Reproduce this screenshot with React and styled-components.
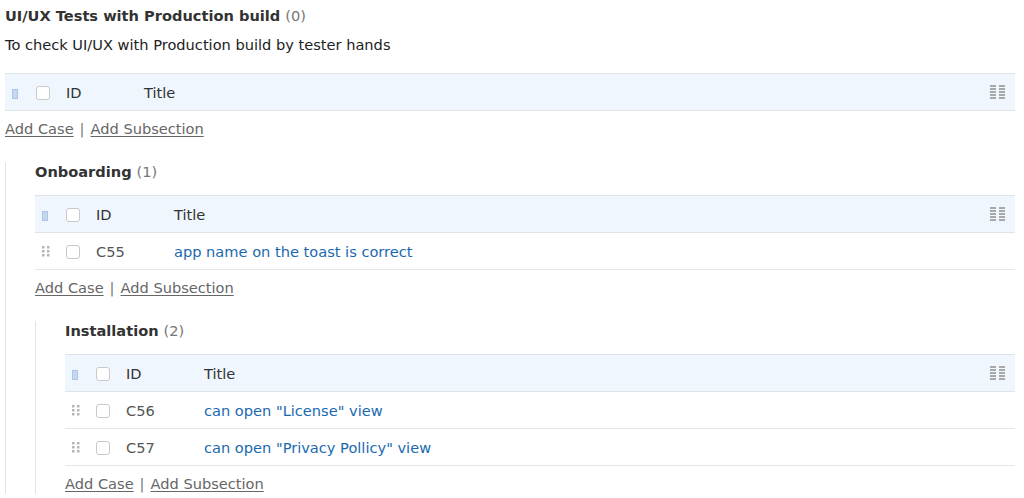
import React from "react";
import styled, { createGlobalStyle } from "styled-components";

const GlobalStyle = createGlobalStyle`
  body {
    margin: 0;
    background: #fff;
    font-family: "DejaVu Sans", Verdana, sans-serif;
    font-size: 14.6px;
    color: #333;
  }
`;

const Page = styled.div`
  padding: 6px 9px 0 5px;
`;

const SectionBox = styled.div`
  margin-top: ${(p) => (p.$nested ? "23px" : "0")};
  border-left: ${(p) => (p.$nested ? "1px solid #e3e3e3" : "none")};
  padding-left: ${(p) => (p.$nested ? "29px" : "0")};
`;

const Heading = styled.div`
  font-weight: bold;
  line-height: 20px;
  color: #333;
`;

const Count = styled.span`
  font-weight: normal;
  color: #777;
  margin-left: 5px;
`;

const Description = styled.div`
  margin-top: 9px;
  line-height: 20px;
  color: #222;
`;

const Table = styled.div`
  margin-top: ${(p) => (p.$afterDesc ? "18px" : "13px")};
`;

const Row = styled.div`
  display: flex;
  align-items: center;
  height: 36px;
  background: ${(p) => (p.$header ? "#f0f6fd" : "#fff")};
  border-top: ${(p) => (p.$header ? "1px solid #dfe3e8" : "none")};
  border-bottom: 1px solid ${(p) => (p.$header ? "#dfe3e8" : "#e6e6e6")};
`;

const HandleCell = styled.div`
  width: 25px;
  box-sizing: border-box;
  padding-left: 7px;
  display: flex;
  align-items: center;
`;

const HeaderMark = styled.span`
  display: block;
  width: 4px;
  height: 8px;
  margin-top: 3px;
  background: #c6d7f2;
  border: 1px solid #aec5ea;
`;

const CheckCell = styled.div`
  width: 36px;
  display: flex;
  align-items: center;
`;

const Check = styled.span`
  display: block;
  width: 12px;
  height: 12px;
  margin: 2px 0 0 6px;
  border: 1px solid #c9c9c9;
  border-radius: 3px;
  background: #fff;
`;

const IdCell = styled.div`
  width: 78px;
  color: ${(p) => (p.$header ? "#333" : "#555")};
`;

const TitleCell = styled.div`
  flex: 1;
  color: #333;
`;

const CaseLink = styled.a`
  color: #1a69b0;
  text-decoration: none;
`;

const ColumnsButton = styled.div`
  width: 15px;
  height: 15px;
  margin-right: 10px;
  display: flex;
`;

const Actions = styled.div`
  margin-top: 8px;
  line-height: 20px;
  color: #666;
`;

const ActionLink = styled.a`
  color: #666;
  text-decoration: underline;
  text-underline-offset: 2px;
`;

const Sep = styled.span`
  margin: 0 6px;
  color: #777;
`;

const Dots = () => (
  <svg width="8" height="11" viewBox="0 0 8 11">
    {[0, 4, 8].map((y) =>
      [0, 5].map((x) => (
        <rect key={`${x}-${y}`} x={x} y={y} width="2.5" height="2.5" fill="#b5b5b5" />
      ))
    )}
  </svg>
);

const ColumnsIcon = () => (
  <svg width="15" height="15" viewBox="0 0 15 15">
    {[0, 3, 6, 9, 12].map((y) => (
      <g key={y}>
        <rect x="0" y={y} width="6" height="2" fill="#a8a8a8" />
        <rect x="9" y={y} width="6" height="2" fill="#a8a8a8" />
      </g>
    ))}
  </svg>
);

const HeaderRow = () => (
  <Row $header>
    <HandleCell>
      <HeaderMark />
    </HandleCell>
    <CheckCell>
      <Check />
    </CheckCell>
    <IdCell $header>ID</IdCell>
    <TitleCell>Title</TitleCell>
    <ColumnsButton>
      <ColumnsIcon />
    </ColumnsButton>
  </Row>
);

const CaseRow = ({ id, title }) => (
  <Row>
    <HandleCell>
      <Dots />
    </HandleCell>
    <CheckCell>
      <Check />
    </CheckCell>
    <IdCell>{id}</IdCell>
    <TitleCell>
      <CaseLink href="#">{title}</CaseLink>
    </TitleCell>
  </Row>
);

const Section = ({ section, nested }) => (
  <SectionBox $nested={nested}>
    <Heading>
      {section.name}
      <Count>({section.cases.length})</Count>
    </Heading>
    {section.description && <Description>{section.description}</Description>}
    <Table $afterDesc={!!section.description}>
      <HeaderRow />
      {section.cases.map((c) => (
        <CaseRow key={c.id} id={c.id} title={c.title} />
      ))}
    </Table>
    <Actions>
      <ActionLink href="#">Add Case</ActionLink>
      <Sep>|</Sep>
      <ActionLink href="#">Add Subsection</ActionLink>
    </Actions>
    {section.children.map((child) => (
      <Section key={child.name} section={child} nested />
    ))}
  </SectionBox>
);

const data = {
  name: "UI/UX Tests with Production build",
  description: "To check UI/UX with Production build by tester hands",
  cases: [],
  children: [
    {
      name: "Onboarding",
      cases: [{ id: "C55", title: "app name on the toast is correct" }],
      children: [
        {
          name: "Installation",
          cases: [
            { id: "C56", title: 'can open "License" view' },
            { id: "C57", title: 'can open "Privacy Pollicy" view' },
          ],
          children: [],
        },
      ],
    },
  ],
};

export default function App() {
  return (
    <>
      <GlobalStyle />
      <Page>
        <Section section={data} />
      </Page>
    </>
  );
}
